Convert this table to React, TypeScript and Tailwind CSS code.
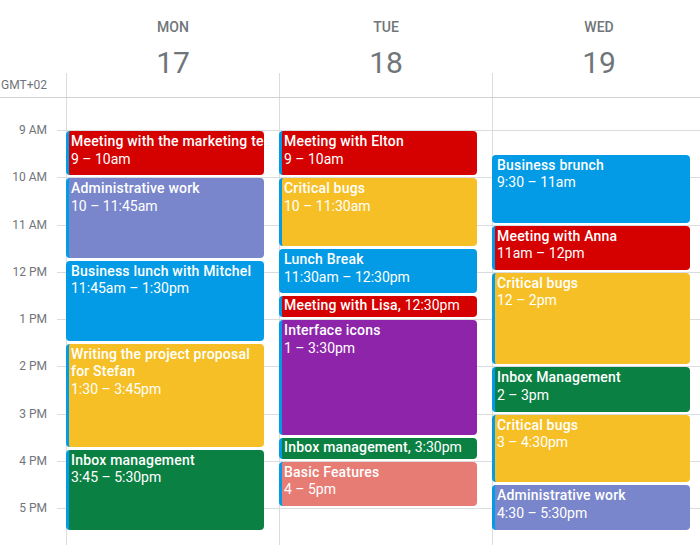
import React from 'react';

type CalEvent = {
  title: string;
  time: string;
  start: number;
  end: number;
  color: string;
  inline?: boolean;
  nowrap?: boolean;
};

const HOUR = 47.25;
const FIRST_HOUR = 9;

const days: { name: string; num: string; events: CalEvent[] }[] = [
  {
    name: 'MON',
    num: '17',
    events: [
      { title: 'Meeting with the marketing team', time: '9 – 10am', start: 9, end: 10, color: 'bg-[#d50000]', nowrap: true },
      { title: 'Administrative work', time: '10 – 11:45am', start: 10, end: 11.75, color: 'bg-[#7986cb]' },
      { title: 'Business lunch with Mitchel', time: '11:45am – 1:30pm', start: 11.75, end: 13.5, color: 'bg-[#039be5]' },
      { title: 'Writing the project proposal for Stefan', time: '1:30 – 3:45pm', start: 13.5, end: 15.75, color: 'bg-[#f6bf26]' },
      { title: 'Inbox management', time: '3:45 – 5:30pm', start: 15.75, end: 17.5, color: 'bg-[#0b8043]' },
    ],
  },
  {
    name: 'TUE',
    num: '18',
    events: [
      { title: 'Meeting with Elton', time: '9 – 10am', start: 9, end: 10, color: 'bg-[#d50000]' },
      { title: 'Critical bugs', time: '10 – 11:30am', start: 10, end: 11.5, color: 'bg-[#f6bf26]' },
      { title: 'Lunch Break', time: '11:30am – 12:30pm', start: 11.5, end: 12.5, color: 'bg-[#039be5]' },
      { title: 'Meeting with Lisa,', time: '12:30pm', start: 12.5, end: 13, color: 'bg-[#d50000]', inline: true },
      { title: 'Interface icons', time: '1 – 3:30pm', start: 13, end: 15.5, color: 'bg-[#8e24aa]' },
      { title: 'Inbox management,', time: '3:30pm', start: 15.5, end: 16, color: 'bg-[#0b8043]', inline: true },
      { title: 'Basic Features', time: '4 – 5pm', start: 16, end: 17, color: 'bg-[#e67c73]' },
    ],
  },
  {
    name: 'WED',
    num: '19',
    events: [
      { title: 'Business brunch', time: '9:30 – 11am', start: 9.5, end: 11, color: 'bg-[#039be5]' },
      { title: 'Meeting with Anna', time: '11am – 12pm', start: 11, end: 12, color: 'bg-[#d50000]' },
      { title: 'Critical bugs', time: '12 – 2pm', start: 12, end: 14, color: 'bg-[#f6bf26]' },
      { title: 'Inbox Management', time: '2 – 3pm', start: 14, end: 15, color: 'bg-[#0b8043]' },
      { title: 'Critical bugs', time: '3 – 4:30pm', start: 15, end: 16.5, color: 'bg-[#f6bf26]' },
      { title: 'Administrative work', time: '4:30 – 5:30pm', start: 16.5, end: 17.5, color: 'bg-[#7986cb]' },
    ],
  },
];

const hours = ['9 AM', '10 AM', '11 AM', '12 PM', '1 PM', '2 PM', '3 PM', '4 PM', '5 PM', ''];

function EventBlock({ ev }: { ev: CalEvent }) {
  const top = 1 + (ev.start - FIRST_HOUR) * HOUR;
  const height = (ev.end - ev.start) * HOUR - 3;
  return (
    <div
      className={`absolute left-[-1px] w-[198px] overflow-hidden rounded-[4px] border-l-[3px] border-[#039be5] pl-[2px] text-[14px] leading-[17.5px] text-white ${ev.color} ${ev.inline ? 'pt-[1px]' : 'pt-[2px]'}`}
      style={{ top, height }}
    >
      {ev.inline ? (
        <div className="whitespace-nowrap">
          <span className="font-medium tracking-[0.2px]">{ev.title}</span> {ev.time}
        </div>
      ) : (
        <>
          <div className={`font-medium tracking-[0.2px] ${ev.nowrap ? 'whitespace-nowrap' : ''}`}>{ev.title}</div>
          <div>{ev.time}</div>
        </>
      )}
    </div>
  );
}

export default function App() {
  return (
    <div className="h-[545px] w-[700px] overflow-hidden bg-white font-['Roboto',sans-serif]">
      {/* header */}
      <div className="flex h-[98px] border-b border-[#d0d2d6]">
        <div className="flex w-[66px] shrink-0 flex-col">
          <div className="h-[73px] shrink-0" />
          <div className="flex h-[24px] shrink-0 items-center justify-end pr-[19px] text-[12px] text-[#70757a]">
            GMT+02
          </div>
        </div>
        {days.map((d) => (
          <div key={d.name} className="flex w-[213px] shrink-0 flex-col">
            <div className="flex h-[73px] shrink-0 flex-col items-center pl-px">
              <div className="pt-[19px] text-[14px] font-medium leading-[16px] text-[#70757a]">{d.name}</div>
              <div className="mt-[14px] text-[30px] leading-[28px] text-[#70757a]">{d.num}</div>
            </div>
            <div className="h-[24px] shrink-0 border-l border-[#dadce0]" />
          </div>
        ))}
      </div>

      {/* body */}
      <div className="flex">
        <div className="w-[66px] shrink-0 pt-[24px]">
          {hours.map((h, i) => (
            <div key={i} className="flex h-[47.25px] items-start">
              <div className="w-[47px] text-right text-[12px] leading-[16px] text-[#70757a]">{h}</div>
              <div className="ml-[10px] mt-[8px] h-px w-[9px] bg-[#dadce0]" />
            </div>
          ))}
        </div>
        {days.map((d) => (
          <div key={d.name} className="relative w-[213px] shrink-0 border-l border-[#dadce0] pt-[32px]">
            {hours.map((h, i) => (
              <div key={i} className="h-[47.25px] border-t border-[#dadce0]" />
            ))}
            <div className="absolute left-0 right-0 top-[32px]">
              {d.events.map((ev, i) => (
                <EventBlock key={i} ev={ev} />
              ))}
            </div>
          </div>
        ))}
      </div>
    </div>
  );
}
